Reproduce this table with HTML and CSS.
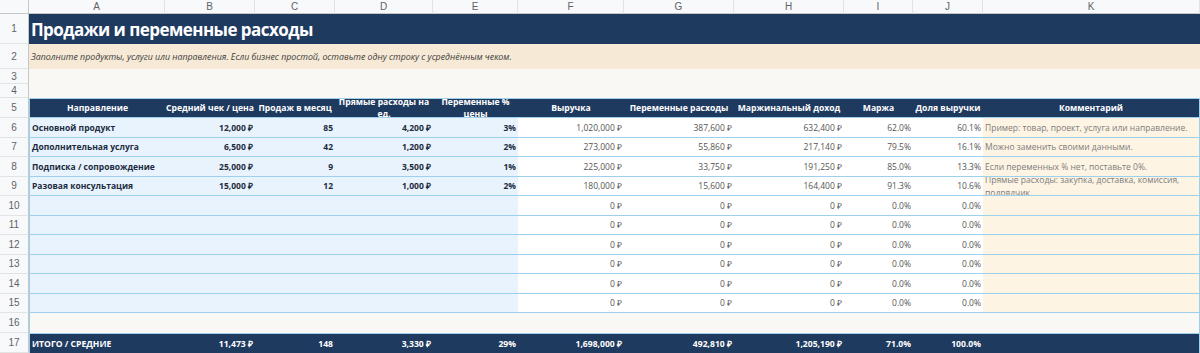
FILE: index.html
```html
<!DOCTYPE html>
<html lang="ru">
<head>
<meta charset="utf-8">
<title>Продажи и переменные расходы</title>
<link rel="stylesheet" href="styles.css">
</head>
<body>
<div class="sheet">
  <div class="row hdr">
    <div class="corner"></div><div>A</div><div>B</div><div>C</div><div>D</div><div>E</div><div>F</div><div>G</div><div>H</div><div>I</div><div>J</div><div>K</div>
  </div>
  <div class="row r1"><div class="rn">1</div><div class="span title">Продажи и переменные расходы</div></div>
  <div class="row r2"><div class="rn">2</div><div class="span note">Заполните продукты, услуги или направления. Если бизнес простой, оставьте одну строку с усреднённым чеком.</div></div>
  <div class="row r3"><div class="rn">3</div><div class="span blank"></div></div>
  <div class="row r4"><div class="rn">4</div><div class="span blank"></div></div>
  <div class="row r5 thead">
    <div class="rn">5</div>
    <div class="th first">Направление</div>
    <div class="th">Средний чек / цена</div>
    <div class="th">Продаж в месяц</div>
    <div class="th wrap">Прямые расходы на<br>ед.</div>
    <div class="th wrap">Переменные %<br>цены</div>
    <div class="th">Выручка</div>
    <div class="th">Переменные расходы</div>
    <div class="th">Маржинальный доход</div>
    <div class="th">Маржа</div>
    <div class="th">Доля выручки</div>
    <div class="th last">Комментарий</div>
  </div>

  <div class="row data">
    <div class="rn">6</div>
    <div class="in first">Основной продукт</div><div class="in r">12,000 ₽</div><div class="in r">85</div><div class="in r">4,200 ₽</div><div class="in r">3%</div>
    <div class="calc">1,020,000 ₽</div><div class="calc">387,600 ₽</div><div class="calc">632,400 ₽</div><div class="calc">62.0%</div><div class="calc">60.1%</div>
    <div class="cm last">Пример: товар, проект, услуга или направление.</div>
  </div>
  <div class="row data">
    <div class="rn">7</div>
    <div class="in first">Дополнительная услуга</div><div class="in r">6,500 ₽</div><div class="in r">42</div><div class="in r">1,200 ₽</div><div class="in r">2%</div>
    <div class="calc">273,000 ₽</div><div class="calc">55,860 ₽</div><div class="calc">217,140 ₽</div><div class="calc">79.5%</div><div class="calc">16.1%</div>
    <div class="cm last">Можно заменить своими данными.</div>
  </div>
  <div class="row data">
    <div class="rn">8</div>
    <div class="in first">Подписка / сопровождение</div><div class="in r">25,000 ₽</div><div class="in r">9</div><div class="in r">3,500 ₽</div><div class="in r">1%</div>
    <div class="calc">225,000 ₽</div><div class="calc">33,750 ₽</div><div class="calc">191,250 ₽</div><div class="calc">85.0%</div><div class="calc">13.3%</div>
    <div class="cm last">Если переменных % нет, поставьте 0%.</div>
  </div>
  <div class="row data">
    <div class="rn">9</div>
    <div class="in first">Разовая консультация</div><div class="in r">15,000 ₽</div><div class="in r">12</div><div class="in r">1,000 ₽</div><div class="in r">2%</div>
    <div class="calc">180,000 ₽</div><div class="calc">15,600 ₽</div><div class="calc">164,400 ₽</div><div class="calc">91.3%</div><div class="calc">10.6%</div>
    <div class="cm last cwrap">Прямые расходы: закупка, доставка, комиссия,<br>подрядчик.</div>
  </div>
  <div class="row data">
    <div class="rn">10</div>
    <div class="in first"></div><div class="in"></div><div class="in"></div><div class="in"></div><div class="in"></div>
    <div class="calc">0 ₽</div><div class="calc">0 ₽</div><div class="calc">0 ₽</div><div class="calc">0.0%</div><div class="calc">0.0%</div>
    <div class="cm last"></div>
  </div>
  <div class="row data">
    <div class="rn">11</div>
    <div class="in first"></div><div class="in"></div><div class="in"></div><div class="in"></div><div class="in"></div>
    <div class="calc">0 ₽</div><div class="calc">0 ₽</div><div class="calc">0 ₽</div><div class="calc">0.0%</div><div class="calc">0.0%</div>
    <div class="cm last"></div>
  </div>
  <div class="row data">
    <div class="rn">12</div>
    <div class="in first"></div><div class="in"></div><div class="in"></div><div class="in"></div><div class="in"></div>
    <div class="calc">0 ₽</div><div class="calc">0 ₽</div><div class="calc">0 ₽</div><div class="calc">0.0%</div><div class="calc">0.0%</div>
    <div class="cm last"></div>
  </div>
  <div class="row data">
    <div class="rn">13</div>
    <div class="in first"></div><div class="in"></div><div class="in"></div><div class="in"></div><div class="in"></div>
    <div class="calc">0 ₽</div><div class="calc">0 ₽</div><div class="calc">0 ₽</div><div class="calc">0.0%</div><div class="calc">0.0%</div>
    <div class="cm last"></div>
  </div>
  <div class="row data">
    <div class="rn">14</div>
    <div class="in first"></div><div class="in"></div><div class="in"></div><div class="in"></div><div class="in"></div>
    <div class="calc">0 ₽</div><div class="calc">0 ₽</div><div class="calc">0 ₽</div><div class="calc">0.0%</div><div class="calc">0.0%</div>
    <div class="cm last"></div>
  </div>
  <div class="row data">
    <div class="rn">15</div>
    <div class="in first"></div><div class="in"></div><div class="in"></div><div class="in"></div><div class="in"></div>
    <div class="calc">0 ₽</div><div class="calc">0 ₽</div><div class="calc">0 ₽</div><div class="calc">0.0%</div><div class="calc">0.0%</div>
    <div class="cm last"></div>
  </div>

  <div class="row r16"><div class="rn">16</div><div class="span blank edge"></div></div>
  <div class="row r17 total">
    <div class="rn">17</div>
    <div class="tl first">ИТОГО / СРЕДНИЕ</div>
    <div class="tv">11,473 ₽</div>
    <div class="tv">148</div>
    <div class="tv">3,330 ₽</div>
    <div class="tv">29%</div>
    <div class="tv">1,698,000 ₽</div>
    <div class="tv">492,810 ₽</div>
    <div class="tv">1,205,190 ₽</div>
    <div class="tv">71.0%</div>
    <div class="tv">100.0%</div>
    <div class="tv last"></div>
  </div>
</div>
</body>
</html>
```

FILE: styles.css
```css
:root {
  --cols: 29px 136px 90px 80px 98px 85px 106px 110px 110px 69px 70px 217px;
  --navy: #1f3a5f;
  --line: #9dd0ec;
  --grid: #e2e3e3;
  --hgrid: #c4c7c5;
}

body {
  margin: 0;
  background: #ffffff;
  font-family: "Open Sans", "Liberation Sans", sans-serif;
}

.sheet {
  width: 1200px;
  height: 353px;
  overflow: hidden;
}

.row {
  display: grid;
  grid-template-columns: var(--cols);
}

.row > div {
  box-sizing: border-box;
  min-width: 0;
  overflow: hidden;
  white-space: nowrap;
  display: flex;
  align-items: center;
  padding: 0 2px;
}

.span {
  grid-column: 2 / -1;
}

/* column header row */
.hdr {
  height: 14px;
}
.hdr > div {
  background: #f8f9fa;
  border-right: 1px solid var(--grid);
  border-bottom: 1px solid var(--hgrid);
  justify-content: center;
  font: 10px "Liberation Sans", Arial, sans-serif;
  color: #5f6368;
}
.hdr > .corner {
  border-right: 1px solid var(--hgrid);
}

/* row numbers */
.row > .rn {
  background: #f8f9fa;
  border-right: 1px solid var(--hgrid);
  border-bottom: 1px solid var(--grid);
  justify-content: center;
  font: 10px "Liberation Sans", Arial, sans-serif;
  color: #5f6368;
}

.r1 { height: 30px; }
.r2 { height: 25px; }
.r3 { height: 15px; }
.r4 { height: 14px; }
.r5 { height: 20px; }
.data { height: 19.5px; }
.r16 { height: 20px; }
.r17 { height: 20px; }

.title {
  background: var(--navy);
  color: #ffffff;
  font-size: 17px;
  font-weight: 700;
  letter-spacing: -0.55px;
  padding-top: 1px;
}

.note {
  background: #f6e9d5;
  color: #3d3d3d;
  font-size: 8.8px;
  font-style: italic;
}

.blank {
  background: #faf8f4;
}

/* table header */
.thead > .th {
  background: var(--navy);
  color: #ffffff;
  font-size: 8.6px;
  font-weight: 700;
  justify-content: center;
  text-align: center;
  border-top: 1px solid var(--line);
  border-bottom: 1px solid var(--line);
}
.thead > .wrap {
  line-height: 12px;
}
.cwrap {
  line-height: 13px;
}

.first {
  border-left: 1px solid var(--line);
}
.last {
  border-right: 1px solid var(--line);
}

/* data cells */
.data > div:not(.rn) {
  font-size: 8.5px;
  border-bottom: 1px solid var(--line);
}
.data > .in {
  background: #e8f3fd;
  color: #1c2b3d;
  font-weight: 700;
}
.data > .r {
  justify-content: flex-end;
}
.data > .calc {
  background: #ffffff;
  color: #555555;
  justify-content: flex-end;
}
.data > .cm {
  background: #fdf4e3;
  color: #7d7d7d;
}

.edge {
  border-left: 1px solid var(--line);
  border-right: 1px solid var(--line);
}

/* totals */
.total > div:not(.rn) {
  background: var(--navy);
  color: #ffffff;
  font-size: 8.6px;
  font-weight: 700;
  border-top: 1px solid var(--line);
}
.total > .tv {
  justify-content: flex-end;
}
```
